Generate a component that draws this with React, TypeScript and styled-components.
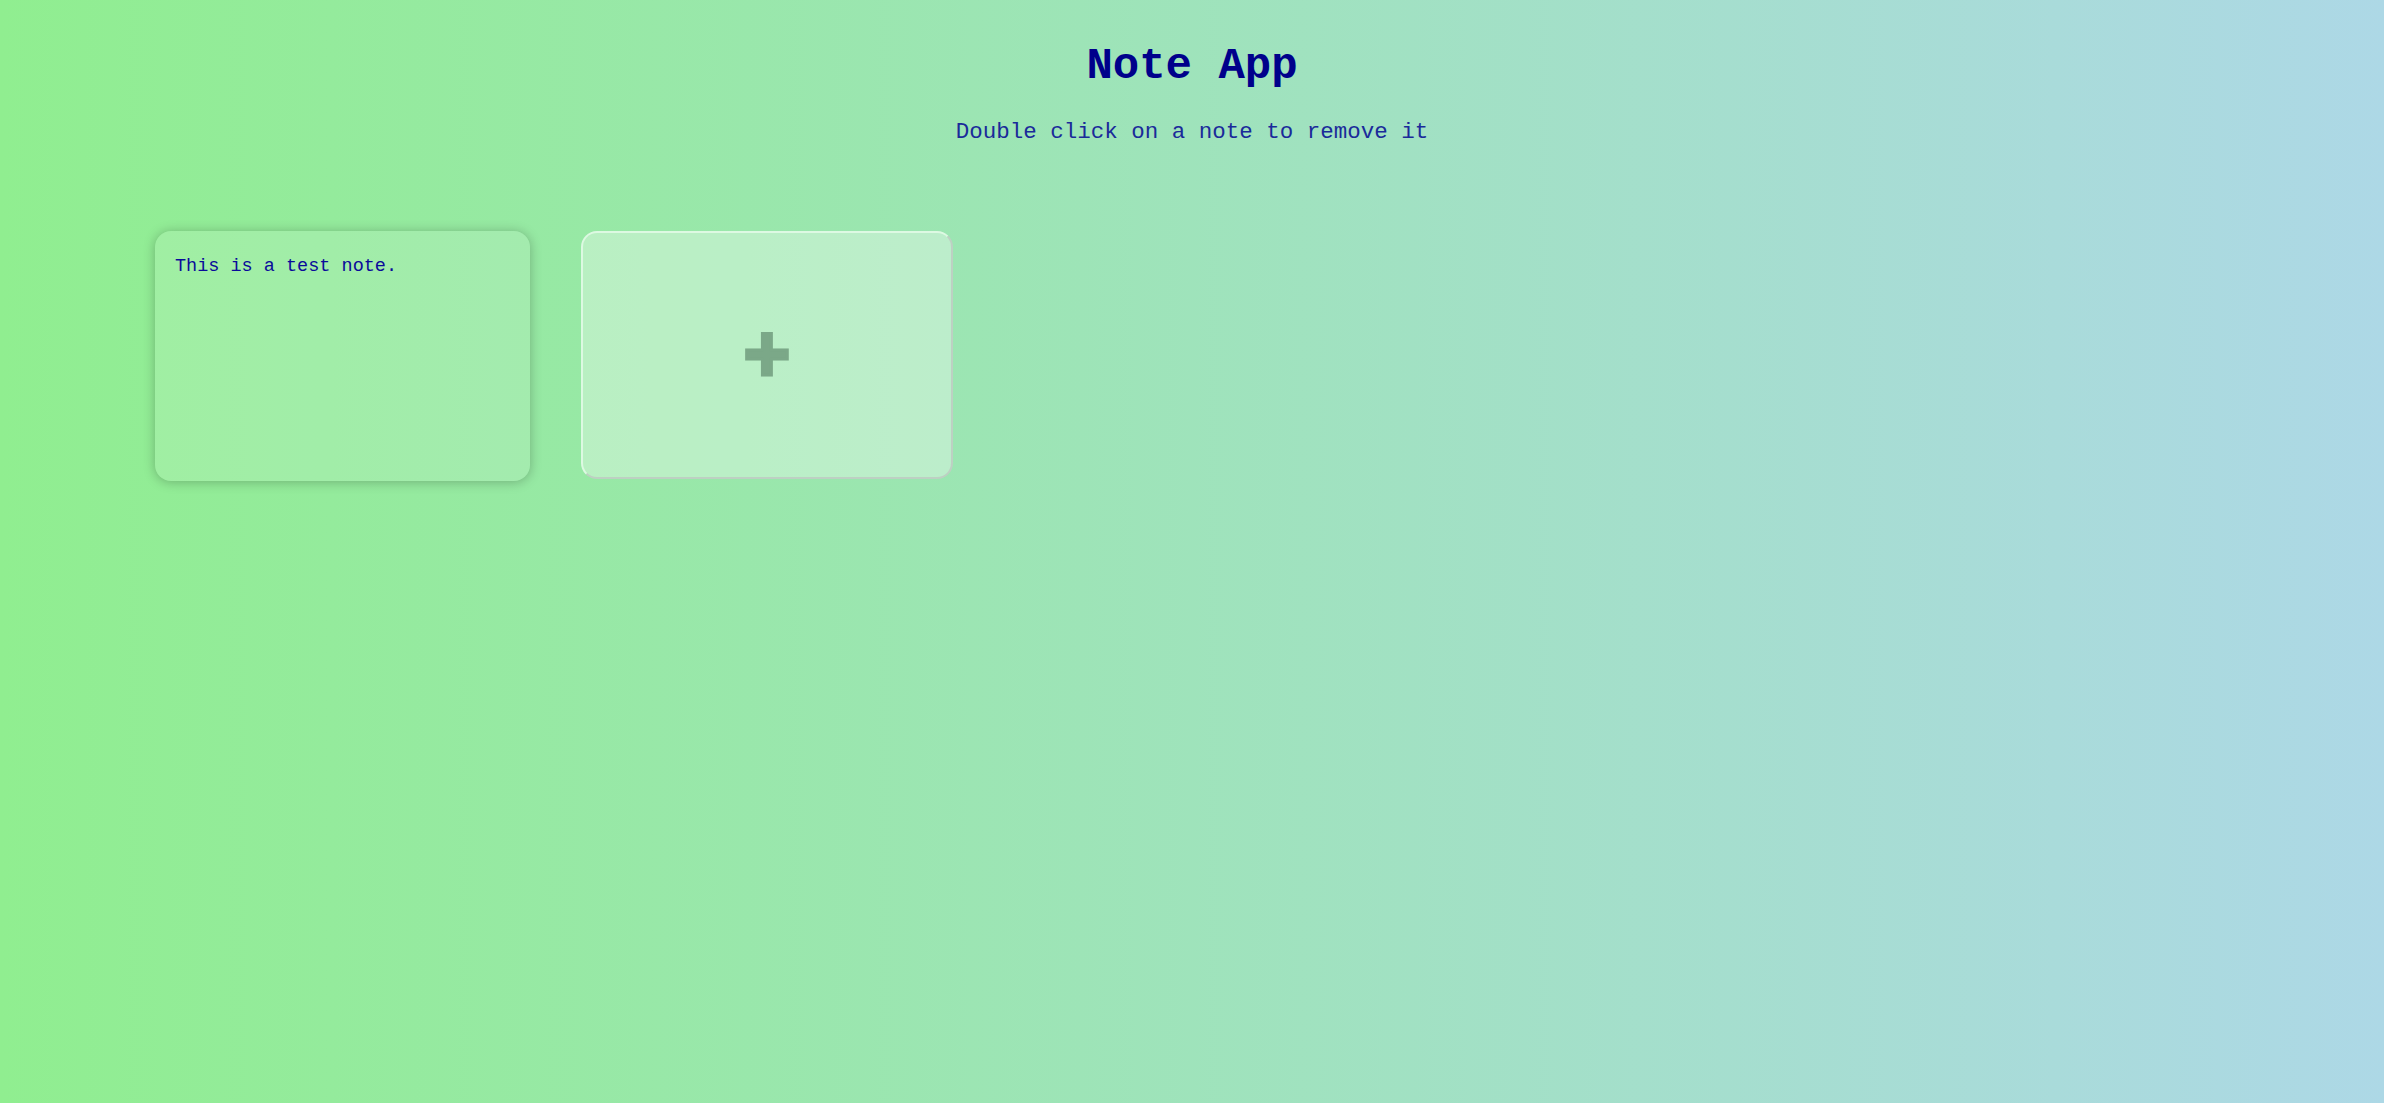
import React from "react";
import styled, { createGlobalStyle } from "styled-components";

const GlobalStyle = createGlobalStyle`
  html, body {
    margin: 0;
    padding: 0;
  }
  body {
    min-height: 100vh;
    background: linear-gradient(to right, #90ee90, #add8e6);
    font-family: "Liberation Mono", "Courier New", monospace;
  }
`;

const Page = styled.div`
  min-height: 1103px;
  display: flex;
  flex-direction: column;
  align-items: stretch;
`;

const Header = styled.header`
  display: flex;
  flex-direction: column;
  align-items: center;
  padding-top: 41px;
`;

const Title = styled.h1`
  margin: 0;
  font-family: "Liberation Mono", "Courier New", monospace;
  font-weight: 700;
  font-size: 44px;
  color: #00008b;
  line-height: 50px;
`;

const Subtitle = styled.p`
  margin: 29px 0 0;
  font-family: "Liberation Mono", "Courier New", monospace;
  font-size: 22.5px;
  line-height: 25px;
  color: #1a2a9a;
`;

const Notes = styled.main`
  display: flex;
  flex-wrap: wrap;
  gap: 51px;
  padding: 86px 0 0 155px;
  align-items: flex-start;
`;

const NoteCard = styled.div`
  box-sizing: border-box;
  width: 375px;
  height: 250px;
  border-radius: 16px;
  padding: 24px 20px;
  background: rgba(255, 255, 255, 0.13);
  box-shadow: 0 1px 12px rgba(0, 0, 0, 0.25);
  font-family: "Liberation Mono", "Noto Sans CJK SC", monospace;
  font-size: 18.5px;
  line-height: 24px;
  color: #0a0a9a;
`;

const AddButton = styled.button`
  box-sizing: border-box;
  width: 372px;
  height: 248px;
  border-radius: 16px;
  border-width: 2px;
  border-style: solid;
  border-color: rgba(225, 250, 230, 0.9) rgba(190, 205, 195, 0.9) rgba(190, 205, 195, 0.9) rgba(225, 250, 230, 0.9);
  background: rgba(255, 255, 255, 0.33);
  display: flex;
  align-items: center;
  justify-content: center;
  padding: 0;
  cursor: pointer;
`;

const PlusSign = styled.span`
  font-family: "Liberation Sans", Arial, sans-serif;
  font-weight: 700;
  font-size: 81px;
  line-height: 1;
  color: #7ba888;
  -webkit-text-stroke: 3px #7ba888;
  margin-top: -3px;
`;

export default function App() {
  return (
    <>
      <GlobalStyle />
      <Page>
        <Header>
          <Title>Note App</Title>
          <Subtitle>Double click on a note to remove it</Subtitle>
        </Header>
        <Notes>
          <NoteCard>This is a test note.</NoteCard>
          <AddButton type="button">
            <PlusSign>+</PlusSign>
          </AddButton>
        </Notes>
      </Page>
    </>
  );
}
